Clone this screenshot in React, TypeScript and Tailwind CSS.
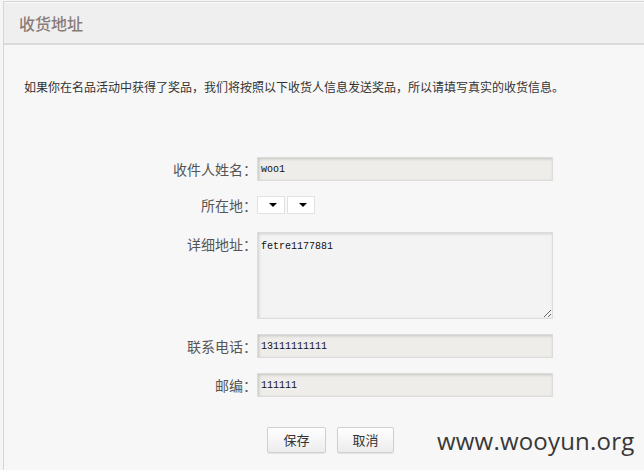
import React from 'react'

const cn = "font-['Noto_Sans_CJK_SC',sans-serif]"
const mono = "font-['Liberation_Mono','Noto_Sans_CJK_SC',monospace]"

const inputCls =
  `w-[296px] h-[24px] border border-[#dcdcdc] bg-[#efede9] shadow-[inset_1px_1px_3px_rgba(0,0,0,0.18)] pl-[3px] text-[10px] text-[#111] flex items-center ${mono}`

const Label: React.FC<{ text: string }> = ({ text }) => (
  <div className={`w-[120px] shrink-0 text-right text-[14px] text-[#555] leading-[24px] ${cn}`}>{text}</div>
)

const Select: React.FC = () => (
  <div className="w-[28px] h-[18px] bg-white border border-[#e2e2e2] flex items-center justify-end pr-[7px]">
    <span className="w-0 h-0 border-l-[4px] border-r-[4px] border-t-[4px] border-l-transparent border-r-transparent border-t-black" />
  </div>
)

const Button: React.FC<{ text: string; w: string }> = ({ text, w }) => (
  <div className={`${w} h-[26px] border border-[#d0d0d0] rounded-[2px] bg-gradient-to-b from-white to-[#ececec] shadow-[0_1px_1px_rgba(0,0,0,0.08)] flex items-center justify-center text-[13px] text-[#333] ${cn}`}>
    {text}
  </div>
)

export default function App() {
  return (
    <div className="relative w-[644px] h-[470px] bg-[#f5f5f5] pl-[3px] pt-[1px] overflow-hidden">
      <div className="h-full bg-[#f7f7f7] border-l border-t border-[#d6d6d6]">
        {/* header */}
        <div className="h-[43px] bg-[#efefef] border-t border-[#fafafa] border-b-[2px] border-b-[#dadada] flex items-center pl-[15px]">
          <span className={`text-[16px] font-medium text-[#8a7c79] ${cn}`}>收货地址</span>
        </div>

        <p className={`mt-[33px] ml-[20px] text-[12px] leading-[18px] text-[#333] ${cn}`}>
          如果你在名品活动中获得了奖品，我们将按照以下收货人信息发送奖品，所以请填写真实的收货信息。
        </p>

        {/* form */}
        <div className="mt-[61px] pl-[133px] flex flex-col">
          <div className="flex items-center h-[24px]">
            <Label text="收件人姓名：" />
            <div className={inputCls}>woo1</div>
          </div>

          <div className="flex items-center h-[24px] mt-[12px]">
            <Label text="所在地：" />
            <div className="flex gap-[2px]">
              <Select />
              <Select />
            </div>
          </div>

          <div className="flex items-start mt-[15px]">
            <Label text="详细地址：" />
            <textarea
              readOnly
              defaultValue="fetre1177881"
              className={`w-[296px] h-[87px] border border-[#dcdcdc] bg-[#f3f3f3] shadow-[inset_1px_1px_3px_rgba(0,0,0,0.15)] px-[3px] pt-[6px] text-[10px] text-[#111] outline-none ${mono}`}
            />
          </div>

          <div className="flex items-center h-[24px] mt-[15px]">
            <Label text="联系电话：" />
            <div className={inputCls}>13111111111</div>
          </div>

          <div className="flex items-center h-[24px] mt-[15px]">
            <Label text="邮编：" />
            <div className={inputCls}>111111</div>
          </div>

          <div className="flex gap-[11px] mt-[30px] pl-[130px]">
            <Button text="保存" w="w-[59px]" />
            <Button text="取消" w="w-[57px]" />
          </div>
        </div>
      </div>

      {/* watermark */}
      <div className="absolute left-[437px] top-[423px] text-[24px] text-[#383838] font-['Open_Sans',sans-serif] tracking-[0.2px]">
        www.wooyun.org
      </div>
    </div>
  )
}
